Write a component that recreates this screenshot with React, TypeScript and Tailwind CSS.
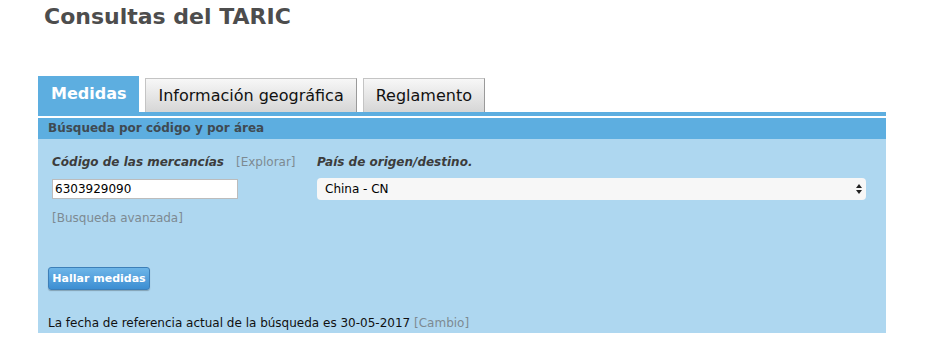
import React, { useState } from "react";

const tabs = ["Medidas", "Información geográfica", "Reglamento"];

const App: React.FC = () => {
  const [active, setActive] = useState("Medidas");
  const [code, setCode] = useState("6303929090");
  const [country, setCountry] = useState("China - CN");

  return (
    <div className="w-[928px] h-[348px] bg-white overflow-hidden font-['DejaVu_Sans',Verdana,sans-serif] text-[#222]">
      <h1 className="pl-[44px] pt-[3px] text-[22px] leading-[28px] font-bold text-[#4d4d4d]">
        Consultas del TARIC
      </h1>

      <div className="ml-[38px] mt-[45px] w-[848px]">
        {/* Tabs */}
        <div className="flex items-end gap-[6px] h-[36px]">
          {tabs.map((t) =>
            t === active ? (
              <button
                key={t}
                onClick={() => setActive(t)}
                className="h-[36px] px-[13px] bg-[#5daee0] text-white font-bold text-[16px] leading-[36px]"
              >
                {t}
              </button>
            ) : (
              <button
                key={t}
                onClick={() => setActive(t)}
                className="h-[34px] px-[12px] bg-gradient-to-b from-[#f7f7f7] to-[#d6d6d6] border border-b-0 border-[#c4c4c4] border-r-[#9a9a9a] text-[16px] leading-[32px] text-[#111]"
              >
                {t}
              </button>
            )
          )}
        </div>
        <div className="h-[4px] bg-[#5daee0]" />
        <div className="h-[2px] bg-white" />

        {/* Panel header */}
        <div className="h-[21px] bg-[#5daee0] pl-[10px] text-[12px] leading-[21px] font-bold text-[#3f4a52]">
          Búsqueda por código y por área
        </div>

        {/* Panel body */}
        <div className="bg-[#aed7f0] h-[194px] pl-[10px] pr-[20px] pt-[14px] text-[12px]">
          <div className="flex">
            <div className="w-[269px] pl-[4px]">
              <div className="flex items-baseline gap-[12px] h-[18px]">
                <span className="font-bold italic text-[#3c3c3c] text-[12px]">Código de las mercancías</span>
                <span className="text-[#7d8a92] text-[12px]">[Explorar]</span>
              </div>
              <input
                value={code}
                onChange={(e) => setCode(e.target.value)}
                className="mt-[8px] w-[186px] h-[20px] bg-white border border-[#bcbcbc] px-[2px] text-[12px] text-black outline-none"
              />
              <div className="mt-[10px] text-[#7d8a92] text-[12px]">[Busqueda avanzada]</div>
            </div>
            <div className="flex-1">
              <div className="h-[18px] font-bold italic text-[#3c3c3c] text-[12px]">País de origen/destino.</div>
              <div className="relative mt-[7px] h-[22px] w-[549px]">
                <select
                  value={country}
                  onChange={(e) => setCountry(e.target.value)}
                  className="appearance-none w-full h-full rounded-[4px] bg-[#f7f7f7] pl-[8px] text-[12px] text-black outline-none"
                >
                  <option>China - CN</option>
                </select>
                <svg
                  className="absolute right-[4px] top-[6px] pointer-events-none"
                  width="6"
                  height="10"
                  viewBox="0 0 6 10"
                >
                  <path d="M3 0 L6 4 L0 4 Z" fill="#222" />
                  <path d="M0 6 L6 6 L3 10 Z" fill="#222" />
                </svg>
              </div>
            </div>
          </div>

          <button className="mt-[40px] h-[23px] w-[102px] rounded-[3px] border border-[#3d7fb8] bg-gradient-to-b from-[#6db5e8] to-[#3c8ed2] text-white font-bold text-[11px] leading-[20px] shadow-[0_1px_1px_rgba(0,0,0,0.25)]">
            Hallar medidas
          </button>

          <div className="mt-[24px] text-[12px] text-[#111]">
            La fecha de referencia actual de la búsqueda es 30-05-2017{" "}
            <span className="text-[#7d8a92]">[Cambio]</span>
          </div>
        </div>
      </div>
    </div>
  );
};

export default App;
